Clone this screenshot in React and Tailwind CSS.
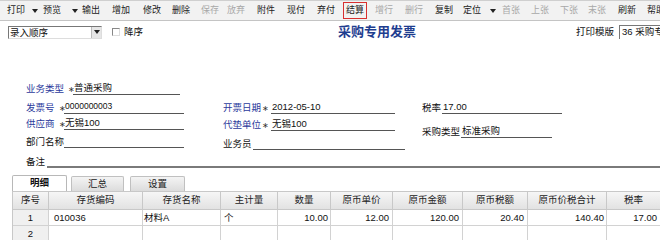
import React from "react";

const F = "font-['Liberation_Sans','Noto_Sans_CJK_SC',sans-serif]";

function Arrow({ cls }) {
  return (
    <span
      className={`inline-block w-0 h-0 border-l-[3px] border-r-[3px] border-t-[4px] border-l-transparent border-r-transparent border-t-[#222] ${cls}`}
    />
  );
}

const tools = [
  { t: "打印", w: "w-[36px]", a: "ml-[7px]" },
  { t: "预览", w: "w-[39px]", a: "ml-[11px]" },
  { t: "输出", w: "w-[30px]" },
  { t: "增加", w: "w-[31px]" },
  { t: "修改", w: "w-[29px]" },
  { t: "删除", w: "w-[29px]" },
  { t: "保存", w: "w-[26px]", d: true },
  { t: "放弃", w: "w-[30px]", d: true },
  { t: "附件", w: "w-[30px]" },
  { t: "现付", w: "w-[30px]" },
  { t: "弃付", w: "w-[29px]" },
  { t: "结算", w: "w-[29px]", box: true },
  { t: "增行", w: "w-[30px]", d: true },
  { t: "删行", w: "w-[30px]", d: true },
  { t: "复制", w: "w-[28px]" },
  { t: "定位", w: "w-[39px]", a: "ml-[9px]" },
  { t: "首张", w: "w-[29px]", d: true },
  { t: "上张", w: "w-[29px]", d: true },
  { t: "下张", w: "w-[28px]", d: true },
  { t: "末张", w: "w-[30px]", d: true },
  { t: "刷新", w: "w-[29px]" },
  { t: "帮助", w: "w-[30px]" },
];

function Field({ label, lw, blue, star, sw, value, vw, cls = "", vcls = "" }) {
  return (
    <div className={`flex items-end h-[15px] ${cls}`}>
      <span className={`${lw} shrink-0 whitespace-nowrap leading-[13px] ${blue ? "text-[#2b3a9c]" : "text-[#111]"}`}>{label}</span>
      {star && <span className={`${sw} shrink-0 leading-[11px] text-[8px] text-[#333]`}>∗</span>}
      <span className={`${vw} shrink-0 whitespace-nowrap border-b border-[#555] leading-[13px] pl-[1px] text-[#111] ${vcls}`}>{value}</span>
    </div>
  );
}

const cols = ["序号", "存货编码", "存货名称", "主计量", "数量", "原币单价", "原币金额", "原币税额", "原币价税合计", "税率"];
const row1 = [
  { v: "1", c: "text-center" },
  { v: "010036", c: "text-left pl-[5px]" },
  { v: "材料A", c: "text-left pl-[1px]" },
  { v: "个", c: "text-left pl-[3px]" },
  { v: "10.00", c: "text-right pr-[2px]" },
  { v: "12.00", c: "text-right pr-[3px]" },
  { v: "120.00", c: "text-right pr-[3px]" },
  { v: "20.40", c: "text-right pr-[3px]" },
  { v: "140.40", c: "text-right pr-[2px]" },
  { v: "17.00", c: "text-right pr-[3px]" },
];

export default function App() {
  return (
    <div className={`w-[660px] h-[240px] overflow-hidden bg-white text-[9.5px] ${F}`}>
      {/* toolbar */}
      <div className="h-[21px] flex items-center pl-[7px] bg-[#f2f2f2] border-t border-[#cfcfcf] border-b border-b-[#c4c4c4] text-[9px]">
        {tools.map((it) => (
          <div key={it.t} className={`flex items-center shrink-0 whitespace-nowrap ${it.w}`}>
            {it.box ? (
              <span className="-ml-[3px] px-[2px] h-[17px] flex items-center border border-[#d83030] text-[#222]">{it.t}</span>
            ) : (
              <span className={it.d ? "text-[#a8a8a8]" : "text-[#222]"}>{it.t}</span>
            )}
            {it.a && <Arrow cls={it.a} />}
          </div>
        ))}
      </div>

      {/* top row */}
      <div className="flex items-center h-[16px] mt-[3px]">
        <div className="ml-[8px] w-[94px] h-[13px] flex border border-t-[#777] border-l-[#777] border-r-[#ddd] border-b-[#ddd] bg-white">
          <span className="flex-1 leading-[11px] pl-[1px] text-[#111] whitespace-nowrap">录入顺序</span>
          <span className="w-[10px] h-[11px] flex items-center justify-center bg-[#e6e6e6] border-l border-[#bbb]">
            <Arrow cls="" />
          </span>
        </div>
        <span className="ml-[10px] w-[8px] h-[8px] border border-t-[#888] border-l-[#888] border-r-[#ddd] border-b-[#ddd] bg-white" />
        <span className="ml-[4px] text-[#111] whitespace-nowrap">降序</span>
        <span className="ml-[195px] text-[13px] font-bold text-[#1e3d8f] whitespace-nowrap">采购专用发票</span>
        <span className="ml-[160px] text-[#111] whitespace-nowrap">打印模版</span>
        <div className="ml-[5px] flex-1 min-w-0 h-[14px] border-l border-t border-[#777] leading-[12px] pl-[2px] text-[#111] whitespace-nowrap overflow-hidden">
          36 采购专用
        </div>
      </div>

      {/* form */}
      <div className="flex mt-[40px]">
        <div className="w-[223px] pl-[26px] flex flex-col shrink-0">
          <Field label="业务类型" lw="w-[42px]" blue star sw="w-[5px]" value="普通采购" vw="w-[107px]" />
          <Field label="发票号" lw="w-[33px]" blue star sw="w-[5px]" value="0000000003" vw="w-[120px]" cls="mt-[4px]" vcls="text-[8.5px]" />
          <Field label="供应商" lw="w-[33px]" blue star sw="w-[5px]" value="无锡100" vw="w-[120px]" cls="mt-[1px]" />
          <Field label="部门名称" lw="w-[38px]" value="" vw="w-[120px]" cls="mt-[3px]" />
        </div>
        <div className="w-[199px] flex flex-col shrink-0">
          <Field label="开票日期" lw="w-[39px]" blue star sw="w-[9px]" value="2012-05-10" vw="w-[124px]" cls="mt-[19px]" />
          <Field label="代垫单位" lw="w-[39px]" blue star sw="w-[9px]" value="无锡100" vw="w-[124px]" cls="mt-[2px]" />
          <Field label="业务员" lw="w-[30px]" value="" vw="w-[152px]" cls="mt-[4px]" />
        </div>
        <div className="flex-1 flex flex-col">
          <Field label="税率" lw="w-[20px]" value="17.00" vw="w-[120px]" cls="mt-[19px]" />
          <Field label="采购类型" lw="w-[39px]" value="标准采购" vw="w-[91px]" cls="mt-[9px]" />
        </div>
      </div>
      <div className="flex items-end h-[16px] mt-[2px] pl-[26px]">
        <span className="w-[21px] shrink-0 whitespace-nowrap leading-[13px] text-[#111]">备注</span>
        <span className="flex-1 h-[2px] bg-[#7a7a7a]" />
      </div>

      {/* tabs */}
      <div className="flex items-end h-[16px] mt-[7px] pl-[12px]">
        <div className="w-[55px] h-[16px] flex items-center justify-center bg-white border border-b-0 border-[#b8b8b8] rounded-t-[2px] font-bold text-[#111]">明细</div>
        <div className="ml-[4px] w-[53px] h-[15px] flex items-center justify-center bg-gradient-to-b from-[#f4f4f4] to-[#dcdcdc] border border-b-0 border-[#c0c0c0] rounded-t-[2px] text-[#222]">汇总</div>
        <div className="ml-[6px] w-[55px] h-[15px] flex items-center justify-center bg-gradient-to-b from-[#f4f4f4] to-[#dcdcdc] border border-b-0 border-[#c0c0c0] rounded-t-[2px] text-[#222]">设置</div>
      </div>

      {/* grid */}
      <div className="ml-[12px] grid grid-cols-[36px_94px_78px_57px_53px_62px_70px_65px_79px_54px] border-t border-l border-[#c8c8c8]">
        {cols.map((c) => (
          <div key={c} className="h-[18px] flex items-center justify-center whitespace-nowrap bg-gradient-to-b from-[#f6f6f6] to-[#e2e2e2] border-r border-b border-[#c8c8c8] text-[#222]">{c}</div>
        ))}
        {row1.map((c, i) => (
          <div key={i} className={`h-[16px] leading-[15px] whitespace-nowrap border-r border-b border-[#d2d2d2] text-[#111] ${i === 0 ? "bg-[#f0f0f0]" : "bg-white"} ${c.c}`}>{c.v}</div>
        ))}
        {cols.map((c, i) => (
          <div key={"r2" + i} className={`h-[16px] leading-[15px] border-r border-b border-[#d2d2d2] text-[#111] ${i === 0 ? "bg-[#f0f0f0] text-center" : "bg-white"}`}>{i === 0 ? "2" : ""}</div>
        ))}
      </div>
    </div>
  );
}
